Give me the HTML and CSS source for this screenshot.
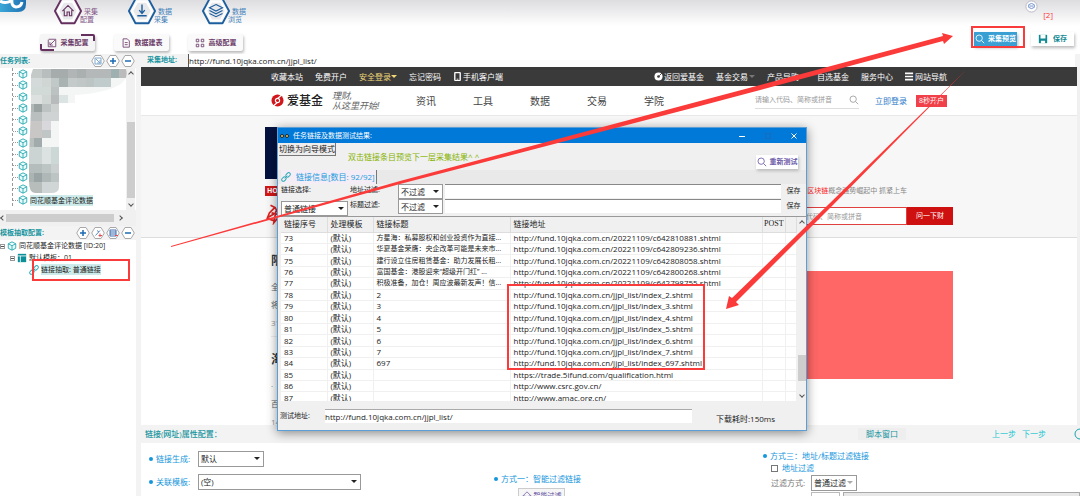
FILE: index.html
```html
<!DOCTYPE html>
<html lang="zh-CN">

<head>
    <meta charset="UTF-8">
    <meta name="viewport" content="width=device-width, initial-scale=1.0">
    <title>采集配置</title>
    <link rel="stylesheet" href="styles.css">
</head>

<body>
    <svg class="defs" width="0" height="0">
        <symbol id="cube" viewBox="0 0 12 12">
            <path d="M6 1 L10.5 3.3 V8.7 L6 11 L1.5 8.7 V3.3 Z M1.5 3.3 L6 5.6 L10.5 3.3 M6 5.6 V11" fill="#e8fafa" stroke="#1aa3ad" stroke-width="1" stroke-linejoin="round"/>
        </symbol>
        <symbol id="lens" viewBox="0 0 12 12">
            <circle cx="5" cy="5" r="3.8" fill="none" stroke="currentColor"/>
            <path d="M8 8 L11 11" stroke="currentColor"/>
        </symbol>
        <symbol id="hex" viewBox="0 0 30 30">
            <path d="M8 1 H22 L29 14 L22 27 H8 L1 14 Z" fill="#f4f4f6" stroke="currentColor" stroke-width="2" stroke-linejoin="round"/>
            <path d="M10 4 H20 L25.500 14 L20 24 H10 L4.500 14 Z" fill="#e9e9ec" stroke="#fff" stroke-width="2"/>
        </symbol>
        <symbol id="minihex" viewBox="0 0 14 14">
            <path d="M4 1.500 H10 L13.300 7 L10 12.500 H4 L.7 7 Z" fill="#fff" stroke="#a8a8a8" stroke-width="1"/>
        </symbol>
        <symbol id="chain" viewBox="0 0 12 12">
            <g fill="none" stroke="#2aa9b5" stroke-width="1.200">
                <rect x="5.500" y="1.500" width="6" height="4" rx="2" transform="rotate(-45 8.500 3.500)"/>
                <rect x=".5" y="6.500" width="6" height="4" rx="2" transform="rotate(-45 3.500 8.500)"/>
                <path d="M4.500 7.500 L7.500 4.500"/>
            </g>
        </symbol>
    </svg>

    <header class="top">
        <svg class="logo" viewBox="0 0 26 12">
            <defs>
                <linearGradient id="lg" x1="0" x2="1"><stop offset="0" stop-color="#3aa8d8"/><stop offset="1" stop-color="#1f6fb0"/></linearGradient>
            </defs>
            <path d="M0 0 H26 V4 Q26 12 18 12 H0 Z" fill="url(#lg)"/>
            <path d="M0 1 Q5 4 11 1 M12 0 Q11 6 16 7 Q21 7 22 2" fill="none" stroke="#fff" stroke-width="3"/>
        </svg>
        <div class="menus">
            <div class="menu purple">
                <a href="#" class="big">
                    <svg class="hexicon" viewBox="0 0 30 30"><use href="#hex"/>
                        <path d="M9 14 L15 8 L21 14 M11 13 V19 H14 V15 H16.500 V19 H19 V13" fill="none" stroke="currentColor" stroke-width="1.200"/></svg>
                    <span>采集<br>配置</span>
                </a>
                <button class="sub on"><svg viewBox="0 0 12 12"><path d="M2 1.500 H10.500 V10.500 H1.500 V2 M3.500 8.500 L9.500 2.500 M3.500 5 V8.500 H7" fill="none" stroke="currentColor"/></svg>采集配置</button>
            </div>
            <div class="menu blue">
                <a href="#" class="big">
                    <svg class="hexicon" viewBox="0 0 30 30"><use href="#hex"/>
                        <path d="M15 7 V16 M12 13 L15 16.500 L18 13 M10 19 H20" fill="none" stroke="currentColor" stroke-width="1.500"/></svg>
                    <span>数据<br>采集</span>
                </a>
                <button class="sub"><svg viewBox="0 0 12 12"><path d="M2.500 1 H7.500 L10 3.500 V11 H2.500 Z M4.500 5.500 H8 M4.500 8 H8" fill="none" stroke="currentColor"/></svg>数据建表</button>
            </div>
            <div class="menu blue">
                <a href="#" class="big">
                    <svg class="hexicon" viewBox="0 0 30 30"><use href="#hex"/>
                        <path d="M15 7 L22 10.500 L15 14 L8 10.500 Z M8 13.500 L15 17 L22 13.500 M8 16.500 L15 20 L22 16.500" fill="none" stroke="currentColor" stroke-width="1.200"/></svg>
                    <span>数据<br>浏览</span>
                </a>
                <button class="sub"><svg viewBox="0 0 12 12"><path d="M1.500 1.500 H4.500 V4.500 H1.500 Z M7.500 1.500 H10.500 V4.500 H7.500 Z M1.500 7.500 H4.500 V10.500 H1.500 Z M7.500 7.500 H10.500 V10.500 H7.500 Z" fill="none" stroke="currentColor"/></svg>高级配置</button>
            </div>
        </div>
        <div class="actions">
            <div class="notice">
                <svg viewBox="0 0 14 14"><circle cx="7" cy="7" r="6" fill="#fff" stroke="#b5b5c5"/><path d="M4 5 Q7 2.500 10 5 V8 Q7 10.500 4 8 Z M5 6.500 H9" fill="none" stroke="#6a8ac8"/></svg>
                <span>[2]</span>
            </div>
            <div class="pair">
                <button class="preview"><svg viewBox="0 0 12 12"><use href="#lens"/></svg>采集预览</button>
                <button class="save"><svg viewBox="0 0 12 12"><path d="M1 1 H11 V11 H1 Z" fill="#118a93"/><path d="M3 1 H9 V5.500 H3 Z M3.500 8 H8.500 V11 H3.500 Z" fill="#fff"/></svg>保存</button>
            </div>
        </div>
    </header>

    <div class="work">
        <aside class="side">
            <div class="caption">
                <h2>任务列表:</h2>
                <button aria-label="导入"><svg viewBox="0 0 14 14"><use href="#minihex"/><path d="M4 4 H10 V10 H4 Z M5 5 L9 9 M9 6 V9 H6" fill="none" stroke="#7fa8cc"/></svg></button>
                <button aria-label="新建任务"><svg viewBox="0 0 14 14"><use href="#minihex"/><path d="M7 4 V10 M4 7 H10" stroke="#1b6ab3" stroke-width="1.500"/></svg></button>
                <button aria-label="删除任务"><svg viewBox="0 0 14 14"><use href="#minihex"/><path d="M4 7 H10" stroke="#1b6ab3" stroke-width="1.500"/></svg></button>
            </div>
            <div class="tasks">
                <ul class="list">
                    <li><svg><use href="#cube"/></svg></li>
                    <li><svg><use href="#cube"/></svg></li>
                    <li><svg><use href="#cube"/></svg></li>
                    <li><svg><use href="#cube"/></svg></li>
                    <li><svg><use href="#cube"/></svg></li>
                    <li><svg><use href="#cube"/></svg></li>
                    <li><svg><use href="#cube"/></svg></li>
                    <li><svg><use href="#cube"/></svg></li>
                    <li><svg><use href="#cube"/></svg></li>
                    <li><svg><use href="#cube"/></svg></li>
                    <li><svg><use href="#cube"/></svg></li>
                    <li><svg><use href="#cube"/></svg><span class="sel">同花顺基金评论数据</span></li>
                </ul>
                <div class="vbar"><i class="up"></i><b></b><i class="down"></i></div>
                <!-- hidden task names -->
                <svg class="mosaic" viewBox="0 0 100 124">
                    <clipPath id="mask"><path d="M4 0 H97 Q100 10 90 16 Q76 24 46 26 V34 H30 V118 Q30 124 22 124 H6 Q0 124 0 112 V88 L2 40 V6 Z"/></clipPath>
                    <g clip-path="url(#mask)">
                        <path d="M0 0h100v124H0z" fill="#f4f6f6"/>
                        <path d="M0 0h13v9H0z" fill="#c3cac8"/><path d="M13 0h9v9h-9z" fill="#b8bebd"/><path d="M22 0h17v9H22z" fill="#a6abab"/><path d="M39 0h9v9h-9z" fill="#b1b5b5"/><path d="M48 0h9v9h-9z" fill="#aaafaf"/><path d="M57 0h25v9H57z" fill="#b4b8b8"/><path d="M82 0h8v9h-8z" fill="#9fb0b0"/><path d="M90 0h9v9h-9z" fill="#bbb"/>
                        <path d="M0 9h13v9H0z" fill="#d3dad9"/><path d="M13 9h9v9h-9z" fill="#d0d6d4"/><path d="M22 9h8v9h-8z" fill="#c0c8c8"/><path d="M30 9h9v9h-9z" fill="#a9b3b1"/><path d="M39 9h9v9h-9z" fill="#c3cac9"/><path d="M48 9h9v9h-9z" fill="#c0c7c6"/><path d="M57 9h8v9h-8z" fill="#bcc4c4"/><path d="M65 9h17v9H65z" fill="#c0cccb"/>
                        <path d="M0 18h22v8H0z" fill="#d2dad8"/><path d="M22 18h8v8h-8z" fill="#bcc2c2"/>
                        <path d="M0 26h13v9H0z" fill="#dde1e0"/><path d="M13 26h9v9h-9z" fill="#cfd6d4"/><path d="M22 26h8v9h-8z" fill="#b7bbbb"/><path d="M30 26h9v9h-9z" fill="#dce3e3"/>
                        <path d="M0 35h5v8H0z" fill="#b2b8b7"/><path d="M5 35h8v8H5z" fill="#9aa3a1"/><path d="M13 35h9v8h-9z" fill="#bdc3c2"/><path d="M22 35h9v8h-9z" fill="#cdd2d1"/>
                        <path d="M0 43h13v9H0z" fill="#b8bfbe"/><path d="M13 43h17v9H13z" fill="#d0d3d3"/>
                        <path d="M0 52h13v9H0z" fill="#c8c7c5"/><path d="M13 52h9v9h-9z" fill="#d8d8dc"/>
                        <path d="M0 61h13v8H0z" fill="#c9c7c5"/><path d="M13 61h9v8h-9z" fill="#c0c6c6"/>
                        <path d="M0 69h5v9H0z" fill="#b8bfbd"/><path d="M5 69h8v9H5z" fill="#a2abab"/>
                        <path d="M0 78h13v17H0z" fill="#ccd4d3"/><path d="M13 78h9v17h-9z" fill="#dce2e1"/><path d="M22 78h9v17h-9z" fill="#ccd8d6"/>
                        <path d="M0 95h13v9H0z" fill="#b5bdbc"/><path d="M13 95h9v9h-9z" fill="#bcc4c4"/><path d="M22 95h9v9h-9z" fill="#cad0d0"/>
                        <path d="M0 104h5v9H0z" fill="#abb3b3"/><path d="M5 104h8v9H5z" fill="#9ba4a4"/><path d="M13 104h9v9h-9z" fill="#afb7b7"/><path d="M22 104h9v9h-9z" fill="#bcc5c4"/>
                        <path d="M0 113h13v11H0z" fill="#b7bdbb"/><path d="M13 113h18v11H13z" fill="#d0d6d5"/>
                    </g>
                </svg>
            </div>
            <div class="hbar"><i class="left"></i><b></b><i class="right"></i></div>
            <div class="caption">
                <h2>模板抽取配置:</h2>
                <button aria-label="新建模板"><svg viewBox="0 0 14 14"><use href="#minihex"/><path d="M7 4 V10 M4 7 H10" stroke="#1b6ab3" stroke-width="1.500"/></svg></button>
                <button aria-label="链接"><svg viewBox="0 0 14 14"><use href="#minihex"/><path d="M4.500 9.500 L9 4.500 M6 4.500 L8 6" stroke="#5a8ac0" fill="none"/><path d="M9 7.500 V11 M7.500 9.500 H11" stroke="#e05050"/></svg></button>
                <button aria-label="数据"><svg viewBox="0 0 14 14"><use href="#minihex"/><path d="M4 4 H10 V10 H4 Z M4 6 H10 M4 8 H10" stroke="#3f6fb0" fill="none"/><path d="M9 9.500 H12" stroke="#e05050"/></svg></button>
                <button aria-label="删除模板"><svg viewBox="0 0 14 14"><use href="#minihex"/><path d="M4 7 H10" stroke="#1b6ab3" stroke-width="1.500"/></svg></button>
            </div>
            <ul class="tree">
                <li><i class="fold"></i><svg><use href="#cube"/></svg><span>同花顺基金评论数据 [ID:20]</span></li>
                <li class="l2"><i class="fold"></i><svg viewBox="0 0 12 12"><path d="M1 1 H11 V11 H1 Z" fill="#0d8f99"/><path d="M1 3.500 H11 M4 3.500 V11" stroke="#fff"/></svg><span>默认模板：01</span></li>
                <li class="l3"><svg><use href="#chain"/></svg><span class="sel">链接抽取: 普通链接</span></li>
            </ul>
        </aside>

        <main class="main">
            <div class="address">
                <label for="url">采集地址:</label>
                <input id="url" type="text" value="http://fund.10jqka.com.cn/jjpl_list/">
            </div>

            <div class="view">
                <div class="site">
                    <nav class="black">
                        <div class="wrap">
                            <a href="#">收藏本站</a>
                            <a href="#">免费开户</a>
                            <a href="#" class="gold">安全登录<i class="tri"></i></a>
                            <a href="#">忘记密码</a>
                            <a href="#" class="phone"><svg viewBox="0 0 8 10"><rect x="1" y=".5" width="6" height="9" rx="1" fill="none" stroke="#fff" stroke-width="1.500"/><path d="M3 8 H5" stroke="#fff"/></svg>手机客户端</a>
                            <a href="#" class="push"><svg viewBox="0 0 10 10"><circle cx="5" cy="5" r="4.500" fill="#fff"/><circle cx="5" cy="5" r="1.500" fill="#3a3a3a"/><path d="M6 4 L9 1" stroke="#3a3a3a"/></svg>返回爱基金</a>
                            <a href="#" class="grey">基金交易<i class="tri"></i></a>
                            <a href="#">产品导购</a>
                            <a href="#" class="gap">自选基金</a>
                            <a href="#">服务中心</a>
                            <a href="#"><svg viewBox="0 0 10 10"><path d="M0 1.500 H9 M0 5 H9 M0 8.500 H9" stroke="#fff" stroke-width="1.800"/></svg>网站导航</a>
                        </div>
                    </nav>
                    <div class="brandbar">
                        <div class="wrap">
                            <svg class="mark" viewBox="0 0 14 14"><circle cx="7" cy="7" r="6.500" fill="#d3161b"/><path d="M7.500 4.500 L11.500 1 M6.500 9.500 L2.500 13" stroke="#fff" stroke-width="1.300"/><circle cx="7" cy="7" r="2.300" fill="#d3161b" stroke="#fff" stroke-width="1.200"/></svg>
                            <strong>爱基金</strong>
                            <em>理财,<br>从这里开始!</em>
                            <div class="links">
                                <a href="#">资讯</a>
                                <a href="#">工具</a>
                                <a href="#">数据</a>
                                <a href="#">交易</a>
                                <a href="#">学院</a>
                            </div>
                            <div class="find">
                                <input type="text" aria-label="搜索" placeholder="请输入代码、简称或拼音">
                                <svg viewBox="0 0 12 12"><use href="#lens"/></svg>
                            </div>
                            <a href="#" class="login">立即登录</a>
                            <button class="open">8秒开户</button>
                        </div>
                    </div>
                    <div class="hero">
                        <div class="wrap">
                            <div class="banner"></div>
                            <div class="hot">
                                <b>HOT</b>
                                <p><span>区块链</span>概念强势崛起中 抓紧上车</p>
                            </div>
                            <div class="ask">
                                <svg viewBox="0 0 20 20"><path d="M5 2 L9 4 L4 9 L2 14 L8 16 M9 4 L12 9 L15 3 M6 9 L14 11 M10 7 L8 18 L13 12 L18 17 M3 13 L8 10" fill="none" stroke="#dd2222" stroke-width="1.500"/></svg>
                                <input type="text" aria-label="问财" placeholder="代码、简称或拼音">
                                <button>问一下财</button>
                            </div>
                        </div>
                    </div>
                    <div class="wrap news">
                        <div class="posts">
                            <article>
                                <h3>限</h3>
                                <p>全</p>
                                <p>将</p>
                                <small>31</small>
                            </article>
                            <article>
                                <h3>海</h3>
                                <p>·</p>
                                <p>百</p>
                                <small>14</small>
                            </article>
                        </div>
                        <div class="ad"></div>
                    </div>
                </div>
                <div class="edge"></div>
            </div>

            <section class="props">
                <div class="propbar">
                    <h2>链接(网址)属性配置：</h2>
                    <a href="#" class="script">脚本窗口</a>
                    <a href="#" class="step">上一步</a>
                    <a href="#" class="step">下一步</a>
                    <svg viewBox="0 0 6 12"><circle cx="6" cy="6" r="5" fill="none" stroke="#1aa3ad"/></svg>
                </div>
                <div class="cols">
                    <div class="one">
                        <div class="line">
                            <label for="gen" class="bullet">链接生成:</label>
                            <span class="drop w65"><select id="gen"><option>默认</option></select></span>
                        </div>
                        <div class="line">
                            <label for="rel" class="bullet">关联模板:</label>
                            <span class="drop w163"><select id="rel"><option>(空)</option></select></span>
                        </div>
                    </div>
                    <div class="two">
                        <p class="bullet">方式一：智能过滤链接</p>
                        <button><svg viewBox="0 0 12 12"><path d="M6 1 L11 6 H8 V11 H4 V6 H1 Z" fill="none" stroke="#7a68b0"/></svg>智能过滤</button>
                    </div>
                    <div class="three">
                        <p class="bullet">方式三：地址/标题过滤链接</p>
                        <label class="check"><input type="checkbox">地址过滤</label>
                        <div class="line">
                            <label for="way">过滤方式:</label>
                            <span class="drop light w45"><select id="way"><option>普通过滤</option></select></span>
                        </div>
                        <div class="cut"><i></i><b></b></div>
                    </div>
                </div>
            </section>
        </main>
    </div>

    <div class="dialog">
        <div class="title">
            <svg class="eyes" viewBox="0 0 9 6"><circle cx="2" cy="3" r="1.500" fill="#f5d76a" stroke="#222"/><circle cx="7" cy="3" r="1.500" fill="#f5d76a" stroke="#222"/></svg>
            <span>任务链接及数据测试结果:</span>
            <button aria-label="最小化"><svg viewBox="0 0 8 8"><path d="M1 4.500 H7" stroke="#fff"/></svg></button>
            <button aria-label="最大化"><svg viewBox="0 0 8 8"><path d="M1.500 1.500 H6.500 V6.500 H1.500 Z" fill="none" stroke="#1a6cb8"/></svg></button>
            <button aria-label="关闭"><svg viewBox="0 0 8 8"><path d="M1.500 1.500 L6.500 6.500 M6.500 1.500 L1.500 6.500" stroke="#fff"/></svg></button>
        </div>
        <div class="hints">
            <button class="mode">切换为向导模式</button>
            <p>双击链接条目预览下一层采集结果^ ^</p>
            <button class="retest"><svg viewBox="0 0 12 12"><use href="#lens"/></svg>重新测试</button>
        </div>
        <div class="tabs">
            <div class="tab"><svg><use href="#chain"/></svg>链接信息[数目: 92/92]</div>
        </div>
        <div class="filters">
            <div class="pick">
                <label for="kind">链接选择:</label>
                <span class="drop"><select id="kind"><option>普通链接</option></select></span>
            </div>
            <div class="rules">
                <div class="rule">
                    <label for="f1">地址过滤:</label>
                    <span class="drop"><select id="f1"><option>不过滤</option></select></span>
                    <input type="text" aria-label="地址过滤内容">
                    <button>保存</button>
                </div>
                <div class="rule">
                    <label for="f2">标题过滤:</label>
                    <span class="drop"><select id="f2"><option>不过滤</option></select></span>
                    <input type="text" aria-label="标题过滤内容">
                    <button>保存</button>
                </div>
            </div>
        </div>
        <div class="grid">
            <div class="scroll">
                <table>
                    <thead>
                        <tr><th class="c1">链接序号</th><th class="c2">处理模板</th><th class="c3">链接标题</th><th>链接地址</th><th class="c5">POST</th><th class="c6"></th></tr>
                    </thead>
                    <tbody>
                        <tr><td>73</td><td>(默认)</td><td class="name">方星海：私募股权和创业投资作为直接...</td><td>http://fund.10jqka.com.cn/20221109/c642810881.shtml</td><td></td><td></td></tr>
                        <tr><td>74</td><td>(默认)</td><td class="name">华夏基金荣膺：央企改革可能是未来市...</td><td>http://fund.10jqka.com.cn/20221109/c642809236.shtml</td><td></td><td></td></tr>
                        <tr><td>75</td><td>(默认)</td><td class="name">建行设立住房租赁基金：助力发展长租...</td><td>http://fund.10jqka.com.cn/20221109/c642808058.shtml</td><td></td><td></td></tr>
                        <tr><td>76</td><td>(默认)</td><td class="name">富国基金：港股迎来“超级开门红” ...</td><td>http://fund.10jqka.com.cn/20221109/c642800268.shtml</td><td></td><td></td></tr>
                        <tr><td>77</td><td>(默认)</td><td class="name">积极准备，加仓！周应波最新发声！信...</td><td>http://fund.10jqka.com.cn/20221109/c642798755.shtml</td><td></td><td></td></tr>
                        <tr><td>78</td><td>(默认)</td><td>2</td><td>http://fund.10jqka.com.cn/jjpl_list/index_2.shtml</td><td></td><td></td></tr>
                        <tr><td>79</td><td>(默认)</td><td>3</td><td>http://fund.10jqka.com.cn/jjpl_list/index_3.shtml</td><td></td><td></td></tr>
                        <tr><td>80</td><td>(默认)</td><td>4</td><td>http://fund.10jqka.com.cn/jjpl_list/index_4.shtml</td><td></td><td></td></tr>
                        <tr><td>81</td><td>(默认)</td><td>5</td><td>http://fund.10jqka.com.cn/jjpl_list/index_5.shtml</td><td></td><td></td></tr>
                        <tr><td>82</td><td>(默认)</td><td>6</td><td>http://fund.10jqka.com.cn/jjpl_list/index_6.shtml</td><td></td><td></td></tr>
                        <tr><td>83</td><td>(默认)</td><td>7</td><td>http://fund.10jqka.com.cn/jjpl_list/index_7.shtml</td><td></td><td></td></tr>
                        <tr><td>84</td><td>(默认)</td><td>697</td><td>http://fund.10jqka.com.cn/jjpl_list/index_697.shtml</td><td></td><td></td></tr>
                        <tr><td>85</td><td>(默认)</td><td></td><td>https://trade.5ifund.com/qualification.html</td><td></td><td></td></tr>
                        <tr><td>86</td><td>(默认)</td><td></td><td>http://www.csrc.gov.cn/</td><td></td><td></td></tr>
                        <tr><td>87</td><td>(默认)</td><td></td><td>http://www.amac.org.cn/</td><td></td><td></td></tr>
                    </tbody>
                </table>
            </div>
            <div class="vbar"><i class="up"></i><b></b><i class="down"></i></div>
        </div>
        <div class="foot">
            <label for="test">测试地址:</label>
            <input id="test" type="text" value="http://fund.10jqka.com.cn/jjpl_list/">
            <span>下载耗时:150ms</span>
        </div>
    </div>

    <svg class="marks" viewBox="0 0 1080 496">
        <g fill="none" stroke="#f93b3b" stroke-width="2">
            <path d="M33 260 H129 V280 H33 Z"/>
            <path d="M508 285 H704 V369 H508 Z"/>
            <path d="M972 27 H1024 V47 H972 Z"/>
        </g>
        <g fill="#fb3a3a">
            <path d="M171 246 L400 181 L700 101 L943 36 L942 33 L953 36 L944 44 L943 41 L700 106 L400 184 L171 247 Z"/>
            <path d="M966 70 L830 203 L732 298 L729 296 L726 309 L739 305 L736 302 L831 207 Z"/>
        </g>
    </svg>
</body>

</html>
```

FILE: styles.css
```css
*{
    margin: 0;
    padding: 0;
    box-sizing: border-box;
}
html{
    overflow: hidden;
}
body{
    height: 100vh;
    display: flex;
    flex-direction: column;
    position: relative;
    overflow: hidden;
    background-color: white;
    color: #222;
    font-family: "Open Sans", "Noto Sans CJK SC", sans-serif;
    font-size: 8px;
    line-height: 12px;
}
button, input, select{
    font: inherit;
    color: inherit;
    background-color: white;
    border: none;
    border-radius: 0;
    outline: none;
    appearance: none;
}
a{
    color: inherit;
    text-decoration: none;
}
ul{
    list-style: none;
}
svg{
    display: block;
    flex: none;
    width: 10px;
    height: 10px;
}
i, em{
    font-style: normal;
}
h2{
    color: #16949e;
    font-size: 8px;
    font-weight: bold;
}
.defs{
    position: absolute;
    width: 0;
    height: 0;
}

/* top bar */
.top{
    flex: none;
    height: 54px;
    display: flex;
    align-items: flex-start;
    background: linear-gradient(#dddde0, #ffffff 26px);
}
.top .logo{
    width: 26px;
    height: 12px;
}
.menus{
    display: flex;
    gap: 19px;
    padding-left: 14px;
}
.menu{
    width: 55px;
}
.purple{
    color: #65305f;
}
.blue{
    color: #1d5f9e;
}
.big{
    display: flex;
    height: 34px;
    padding-left: 14px;
}
.big span{
    padding-top: 8px;
    line-height: 8px;
    font-size: 7px;
    color: #3f7fb8;
    text-indent: 4px;
    white-space: nowrap;
}
.purple .big span{
    color: #84598a;
}
.big .hexicon{
    width: 28px;
    height: 28px;
    margin: -2px -2px 0 0;
}
.sub{
    display: flex;
    align-items: center;
    justify-content: center;
    gap: 4px;
    width: 55px;
    height: 17px;
    border-radius: 2px;
    color: #6b3a68;
    font-size: 7px;
    font-weight: bold;
    background-color: #fafafa;
    box-shadow: 1px 2px 3px #bbb;
}
.sub.on{
    background: linear-gradient(#65305f, #65305f) right top / 14px 2px no-repeat,
        linear-gradient(#65305f, #65305f) right top / 2px 7px no-repeat,
        linear-gradient(#65305f, #65305f) left bottom / 14px 2px no-repeat,
        linear-gradient(#65305f, #65305f) left bottom / 2px 7px no-repeat, #f5f5f5;
}
.actions{
    margin-left: auto;
    padding-right: 6px;
}
.notice{
    display: flex;
    justify-content: flex-end;
    gap: 5px;
    height: 32px;
    padding-right: 21px;
    color: #f33;
}
.notice svg{
    width: 13px;
    height: 13px;
}
.notice span{
    padding-top: 9px;
}
.pair{
    display: flex;
    gap: 14px;
}
.pair button, .retest{
    display: flex;
    align-items: center;
    justify-content: center;
    gap: 3px;
    width: 43px;
    height: 14px;
    font-size: 7px;
    font-weight: bold;
    white-space: nowrap;
    box-shadow: 1px 2px 3px #bbb;
}
.pair .preview{
    color: white;
    background-color: #3aa0d4;
}
.pair .save{
    color: #118a93;
    gap: 5px;
}

/* left side */
.work{
    flex: 1;
    display: flex;
    min-height: 0;
}
.side{
    flex: none;
    width: 141px;
    border-right: 5px solid #f3f3f3;
    font-size: 7px;
}
.caption{
    display: flex;
    align-items: center;
    gap: 1px;
    height: 14px;
    padding-right: 1px;
    background-color: #f3f3f3;
}
.caption h2{
    flex: 1;
    font-size: 7px;
}
.caption button{
    background: none;
}
.caption svg{
    width: 14px;
    height: 14px;
}
.tasks{
    display: flex;
    position: relative;
    height: 142px;
}
.list{
    flex: 1;
    height: 138px;
    display: grid;
    grid-template-rows: repeat(12, 1fr);
    margin-left: 12px;
    border-left: 1px dashed #999;
}
.list li, .tree li{
    display: flex;
    align-items: center;
    white-space: nowrap;
}
.list li::before{
    content: "";
    width: 5px;
    border-top: 1px dotted #999;
}
.list svg, .tree svg{
    width: 10px;
    height: 10px;
    margin-right: 2px;
}
.sel{
    background-color: #cdebea;
    line-height: 11px;
}
.mosaic{
    position: absolute;
    left: 29px;
    top: 1px;
    width: 100px;
    height: 124px;
}
.vbar{
    flex: none;
    width: 9px;
    display: flex;
    flex-direction: column;
    align-items: center;
    background-color: #f0f0f0;
}
.vbar i, .hbar i{
    width: 4px;
    height: 4px;
    margin: 4px;
    border-left: 1px solid #555;
    border-top: 1px solid #555;
    rotate: 45deg;
}
.vbar .down{
    rotate: 225deg;
}
.vbar b{
    width: 8px;
    background-color: #cdcdcd;
}
.tasks .vbar{
    margin-right: 1px;
}
.tasks .vbar b{
    height: 76px;
    margin-top: auto;
}
.hbar{
    display: flex;
    align-items: center;
    height: 16px;
    background-color: #f0f0f0;
}
.hbar .left{
    margin: 0 1px;
    rotate: -45deg;
}
.hbar b{
    width: 108px;
    height: 8px;
    background-color: #cdcdcd;
}
.hbar .right{
    rotate: 135deg;
}
.tree{
    display: grid;
    grid-template-rows: repeat(3, 1fr);
    height: 35px;
}
.fold{
    width: 5px;
    height: 5px;
    margin-right: 2px;
    border: 1px solid #999;
    background: linear-gradient(#555, #555) center / 3px 1px no-repeat;
}
.tree .l2{
    padding-left: 10px;
}
.tree .l3{
    padding-left: 29px;
}

/* address and browser */
.main{
    flex: 1;
    min-width: 0;
    display: flex;
    flex-direction: column;
}
.address{
    flex: none;
    display: flex;
    height: 13px;
    padding-left: 6px;
    background-color: #f3f3f3;
}
.address label{
    width: 41px;
    color: #16949e;
    font-size: 7px;
    font-weight: bold;
}
.address input{
    flex: 1;
    border-left: 1px solid #555;
    margin-right: 5px;
}
.view{
    flex: 1;
    display: flex;
    min-height: 0;
    overflow: hidden;
}
.site{
    flex: 1;
}
.edge{
    width: 3px;
    background-color: #f0f0f0;
}
.wrap{
    max-width: 688px;
    margin: 0 auto;
}
.black{
    background-color: #3a3a3a;
    color: white;
}
.black .wrap{
    display: flex;
    align-items: center;
    gap: 12px;
    height: 19px;
    padding: 0 6px;
    white-space: nowrap;
}
.black a{
    display: flex;
    align-items: center;
    gap: 1px;
}
.black svg{
    width: 9px;
    height: 9px;
}
.black .push{
    margin-left: auto;
}
.black .gap{
    margin-left: 6px;
}
.black .gold{
    gap: 0;
    color: #f0d878;
}
.tri{
    border: 3px solid transparent;
    border-top-color: #f0d878;
    border-bottom: none;
}
.grey .tri{
    border-top-color: #777;
}
.brandbar{
    border-bottom: 1px solid #e8e8e8;
}
.brandbar .wrap{
    display: flex;
    align-items: center;
    height: 29px;
    padding: 0 6px;
}
.brandbar .mark{
    width: 13px;
    height: 13px;
}
.brandbar strong{
    width: 48px;
    padding-left: 3px;
    font-size: 12px;
    font-weight: 500;
}
.brandbar em{
    width: 84px;
    color: #666;
    font-style: italic;
    font-size: 9px;
    line-height: 10px;
}
.links{
    display: flex;
    gap: 37px;
    color: #444;
    font-size: 10px;
}
.find{
    display: flex;
    align-items: center;
    width: 104px;
    height: 17px;
    margin: 0 16px 0 auto;
    border-bottom: 1px solid #ddd;
    color: #999;
    font-size: 7px;
}
.find input{
    flex: 1;
    min-width: 0;
}
input::placeholder{
    color: #999;
}
.login{
    color: #2a78c8;
    margin-right: 9px;
}
.open{
    width: 31px;
    height: 12px;
    color: white;
    background-color: #f0404a;
    font-size: 7px;
}
.hero{
    background-color: #f7f7f7;
    border-bottom: 1px solid #ddd;
    padding: 11px 0 12px;
}
.banner{
    width: 70%;
    height: 52px;
    background-color: #04123f;
}
.hot{
    display: flex;
    align-items: center;
    justify-content: space-between;
    height: 24px;
    font-size: 7px;
    color: #888;
}
.hot b{
    background-color: #d21818;
    color: white;
    line-height: 10px;
    padding: 0 2px;
}
.hot p{
    padding-right: 46px;
}
.hot span{
    color: #f22;
}
.ask{
    display: flex;
    height: 22px;
    font-size: 7px;
}
.ask svg{
    width: 22px;
    height: 22px;
}
.ask input{
    flex: 1;
    height: 18px;
    margin: 4px 0 0 240px;
    padding-right: 44px;
    border: 1px solid #e04040;
    text-align: right;
}
.ask button{
    width: 46px;
    height: 18px;
    margin-top: 4px;
    color: white;
    background-color: #cf1010;
}
.news{
    display: flex;
    justify-content: space-between;
    color: #666;
}
.posts{
    flex: 1;
    padding: 0 6px;
}
.posts article{
    height: 99px;
    padding-top: 14px;
    border-bottom: 1px solid #eee;
}
.posts h3{
    color: #333;
    font-size: 12px;
    line-height: 18px;
    margin-bottom: 8px;
}
.posts p{
    line-height: 18px;
}
.posts small{
    font-size: 8px;
    line-height: 18px;
    color: #999;
}
.ad{
    width: 300px;
    height: 108px;
    margin-top: 33px;
    background-color: #ff6666;
}

/* properties */
.props{
    flex: none;
    height: 71px;
    overflow: hidden;
}
.propbar{
    display: flex;
    align-items: center;
    height: 18px;
    padding-left: 4px;
    background-color: #f3f3f3;
}
.propbar h2{
    font-size: 8px;
    font-weight: 500;
}
.propbar a{
    color: #1cc4d0;
    padding-right: 6px;
}
.propbar .script{
    margin-left: auto;
    padding: 0 8px;
    margin-right: 86px;
    color: #16949e;
    background-color: #eeeeee;
}
.propbar svg{
    width: 6px;
    height: 12px;
    margin-left: 22px;
}
.cols{
    display: flex;
    color: #1496dc;
}
.bullet::before{
    content: "";
    display: inline-block;
    width: 4px;
    height: 4px;
    margin-right: 3px;
    border-radius: 50%;
    vertical-align: 1px;
    background-color: #1496dc;
}
.one{
    width: 345px;
    padding: 8px 0 0 8px;
}
.line{
    display: flex;
    align-items: center;
}
.one .line{
    height: 16px;
    margin-bottom: 7px;
}
.one label{
    width: 49px;
}
.drop{
    position: relative;
    display: block;
    height: 16px;
    color: #222;
}
.drop select{
    width: 100%;
    height: 100%;
    padding-left: 2px;
    border: 1px solid #999;
}
.drop::after{
    content: "";
    position: absolute;
    right: 4px;
    top: 6px;
    border: 3px solid transparent;
    border-top-color: #222;
    border-bottom: none;
    pointer-events: none;
}
.light::after{
    border-top-color: #aaa;
}
.w65{
    width: 66px;
}
.w163{
    width: 163px;
}
.w45{
    width: 46px;
}
.two{
    flex: 1;
    padding: 30px 0 0 8px;
}
.two button{
    display: flex;
    align-items: center;
    justify-content: center;
    gap: 2px;
    width: 47px;
    height: 16px;
    margin: 3px 0 0 24px;
    border: 1px solid #ccc;
    color: #5c4aa0;
    font-size: 7px;
    background-color: #f6f6f6;
}
.three{
    width: 317px;
    padding-top: 7px;
}
.check{
    display: flex;
    align-items: center;
    gap: 4px;
    padding-left: 8px;
}
.check input{
    width: 7px;
    height: 7px;
    border: 1px solid #777;
}
.three .line{
    color: #777;
    padding: 1px 0 1px 8px;
}
.three .line label{
    width: 40px;
}
.cut{
    display: flex;
    gap: 3px;
    height: 10px;
    padding-left: 48px;
}
.cut i{
    width: 29px;
    border: 1px solid #bbb;
}
.cut b{
    flex: 1;
    border: 1px solid #aaa;
    background-color: #e8e8e8;
}

/* test result window */
.dialog{
    position: absolute;
    left: 277px;
    top: 127px;
    width: 530px;
    border: 1px solid #5a9fd8;
    background-color: #f0f0f0;
    box-shadow: 0 2px 10px rgba(0, 0, 0, 0.45);
    color: #222;
}
.title{
    display: flex;
    align-items: center;
    gap: 4px;
    height: 15px;
    padding: 0 8px 0 2px;
    color: white;
    font-size: 7px;
    background-color: #0079d8;
}
.eyes{
    width: 9px;
    height: 6px;
}
.title span{
    flex: 1;
}
.title button{
    background: none;
    margin-left: 14px;
}
.title button svg{
    width: 8px;
    height: 8px;
}
.hints{
    display: flex;
    height: 27px;
}
.mode{
    width: 57px;
    height: 13px;
    margin-left: 1px;
    white-space: nowrap;
    background-color: #ededed;
    border-right: 1px solid #777;
    border-bottom: 1px solid #777;
}
.hints p{
    padding: 8px 0 0 12px;
    color: #86b300;
}
.retest{
    width: 42px;
    margin: 12px 8px 0 auto;
    color: #6a58a8;
}
.tabs{
    display: flex;
    height: 14px;
    padding-left: 3px;
    background-color: #e9e9e9;
}
.tab{
    display: flex;
    align-items: center;
    gap: 5px;
    width: 96px;
    color: #1a9be0;
    background-color: #f4edf5;
    border-right: 1px solid #777;
    white-space: nowrap;
}
.filters{
    display: flex;
    height: 33px;
    padding-left: 3px;
    background-color: #f0f0f0;
    border-bottom: 1px solid #999;
}
.pick{
    width: 69px;
}
.pick label{
    display: block;
    height: 17px;
}
.pick .drop{
    width: 67px;
    height: 15px;
}
.rules{
    flex: 1;
}
.rule{
    display: flex;
    height: 15px;
}
.rule label{
    width: 48px;
}
.rule .drop{
    width: 45px;
    height: 15px;
    margin-right: 2px;
}
.rule input{
    flex: 1;
    min-width: 0;
    height: 14px;
    border-top: 1px solid #888;
}
.rule button{
    width: 25px;
    height: 13px;
    background: none;
}
.filters label, .filters button{
    font-size: 7px;
}
.grid{
    display: flex;
    height: 184px;
    margin-left: 3px;
    background-color: white;
}
.scroll{
    flex: 1;
    min-width: 0;
    overflow: hidden;
}
.scroll table{
    width: 100%;
    table-layout: fixed;
    border-collapse: collapse;
    height: 187px;
}
.scroll th{
    height: 15px;
    padding: 0 3px;
    font-weight: normal;
    text-align: left;
    white-space: nowrap;
    background-color: #f0f0f0;
    border-right: 1px solid #ddd;
    border-bottom: 1px solid #ddd;
}
.c1{
    width: 46px;
}
.c2{
    width: 46px;
}
.c3{
    width: 137px;
}
.scroll .c5{
    width: 23px;
    padding: 0 1px;
    font-family: "Liberation Serif", serif;
}
.c6{
    width: 11px;
}
.scroll td{
    padding: 0 3px;
    line-height: 10px;
    white-space: nowrap;
    overflow: hidden;
    border-right: 1px solid #f0f0f0;
    border-bottom: 1px solid #f0f0f0;
}
.scroll .name{
    font-size: 7px;
}
.grid .vbar b{
    height: 26px;
    margin-top: auto;
    margin-bottom: 8px;
}
.foot{
    display: flex;
    align-items: center;
    height: 29px;
    padding-left: 2px;
}
.foot label{
    width: 45px;
    font-size: 7px;
}
.foot input{
    width: 367px;
    height: 14px;
    border-top: 1px solid #aaa;
}
.foot span{
    padding: 6px 0 0 24px;
}

/* red boxes and arrows over everything */
.marks{
    position: absolute;
    left: 0;
    top: 0;
    width: 1080px;
    height: 496px;
    pointer-events: none;
}
```
